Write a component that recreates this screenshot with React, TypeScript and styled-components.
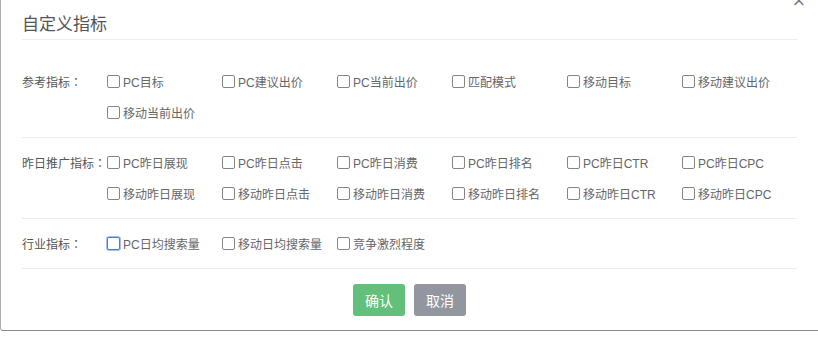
import React from "react";
import styled, { createGlobalStyle } from "styled-components";

const Global = createGlobalStyle`
  html, body { margin: 0; padding: 0; background: #fff; }
  body { font-family: "Liberation Sans", "Noto Sans CJK SC", sans-serif; }
  * { box-sizing: border-box; }
`;

const Modal = styled.div`
  position: relative;
  width: 818px;
  height: 331px;
  background: #fff;
  border-bottom: 1px solid #8a8a8a;
  border-left: 1px solid #b0b0b0;
  border-bottom-left-radius: 3px;
  padding: 0 21px 0 21px;
`;

const Close = styled.span`
  position: absolute;
  right: 12px;
  top: -8px;
  font-size: 17px;
  color: #777;
  line-height: 17px;
  font-family: "DejaVu Sans", sans-serif;
`;

const Header = styled.div`
  height: 40px;
  padding-top: 11px;
  border-bottom: 1px solid #ececec;
`;

const Title = styled.h3`
  margin: 0;
  font-size: 17px;
  line-height: 24px;
  font-weight: normal;
  color: #555;
  font-family: "Noto Sans CJK SC", sans-serif;
`;

const Section = styled.div<{ $first?: boolean }>`
  display: flex;
  padding: ${(p) => (p.$first ? "26px" : "9px")} 0 9px;
  border-bottom: 1px solid #ececec;
`;

const Label = styled.div`
  width: 85px;
  flex: none;
  height: 31px;
  line-height: 31px;
  font-size: 12px;
  color: #555;
  white-space: nowrap;
`;

const Colon = styled.span`
  font-family: "Noto Sans CJK JP", sans-serif;
`;

const Grid = styled.div`
  display: grid;
  grid-template-columns: repeat(6, 115px);
  grid-auto-rows: 31px;
`;

const Item = styled.label`
  display: flex;
  align-items: center;
  font-size: 12px;
  color: #666;
  white-space: nowrap;
`;

const Box = styled.input<{ $focus?: boolean }>`
  appearance: none;
  width: 13px;
  height: 13px;
  margin: 0 3px 0 0;
  border: 1px solid ${(p) => (p.$focus ? "#4a7fd0" : "#858585")};
  border-radius: 2px;
  background: #fff;
  box-shadow: ${(p) => (p.$focus ? "0 0 0 1px rgba(90,140,220,0.55)" : "none")};
  flex: none;
`;

const Footer = styled.div`
  display: flex;
  justify-content: center;
  gap: 9px;
  padding-top: 15px;
`;

const Button = styled.button<{ $variant: "ok" | "cancel" }>`
  width: 52px;
  height: 32px;
  border: none;
  border-radius: 3px;
  color: #fff;
  font-size: 14px;
  font-family: "Noto Sans CJK SC", sans-serif;
  background: ${(p) => (p.$variant === "ok" ? "#62c07a" : "#92969e")};
  padding: 0;
`;

const sections: { label: string; items: string[]; focus?: number }[] = [
  {
    label: "参考指标",
    items: ["PC目标", "PC建议出价", "PC当前出价", "匹配模式", "移动目标", "移动建议出价", "移动当前出价"],
  },
  {
    label: "昨日推广指标",
    items: [
      "PC昨日展现", "PC昨日点击", "PC昨日消费", "PC昨日排名", "PC昨日CTR", "PC昨日CPC",
      "移动昨日展现", "移动昨日点击", "移动昨日消费", "移动昨日排名", "移动昨日CTR", "移动昨日CPC",
    ],
  },
  {
    label: "行业指标",
    items: ["PC日均搜索量", "移动日均搜索量", "竞争激烈程度"],
    focus: 0,
  },
];

export default function App() {
  return (
    <>
      <Global />
      <Modal>
        <Close>×</Close>
        <Header>
          <Title>自定义指标</Title>
        </Header>
        {sections.map((s, si) => (
          <Section key={s.label} $first={si === 0}>
            <Label>
              {s.label}
              <Colon>：</Colon>
            </Label>
            <Grid>
              {s.items.map((it, i) => (
                <Item key={it}>
                  <Box type="checkbox" $focus={s.focus === i} />
                  {it}
                </Item>
              ))}
            </Grid>
          </Section>
        ))}
        <Footer>
          <Button $variant="ok">确认</Button>
          <Button $variant="cancel">取消</Button>
        </Footer>
      </Modal>
    </>
  );
}
